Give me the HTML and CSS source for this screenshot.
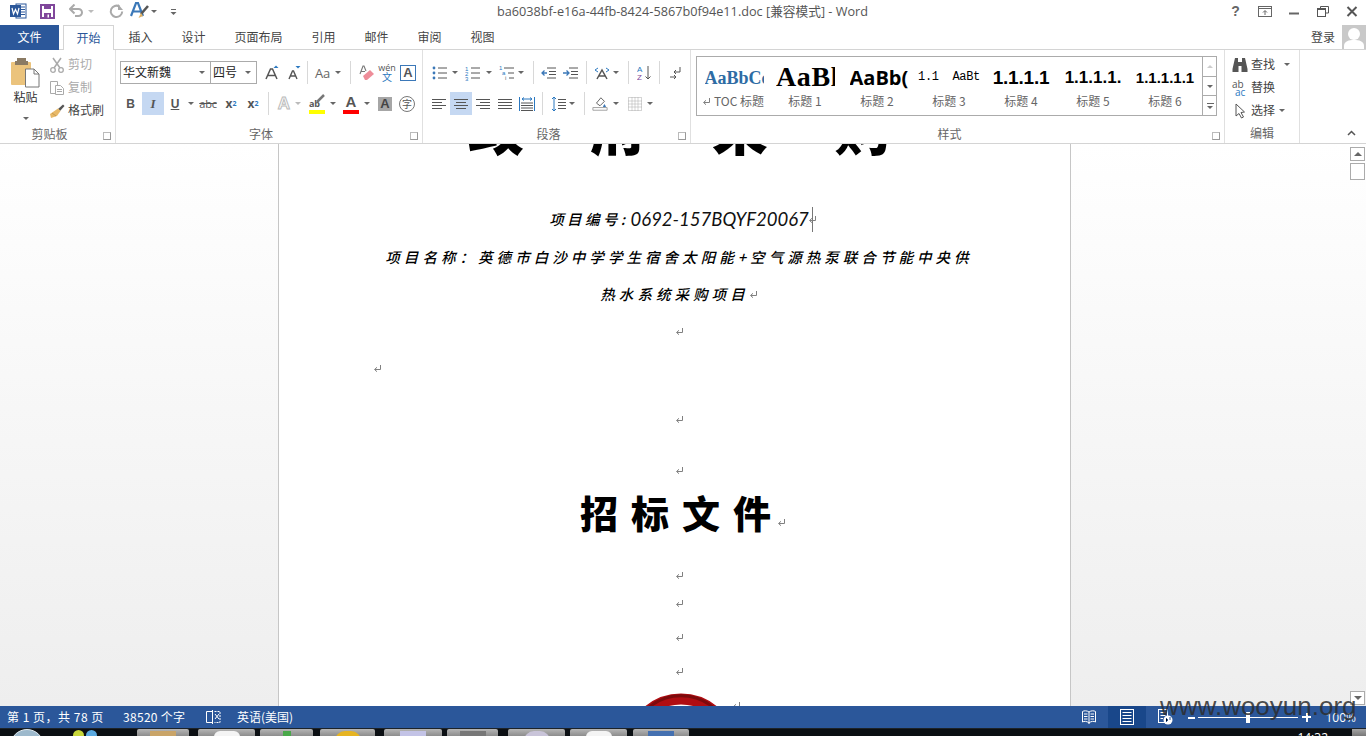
FILE: index.html
```html
<!DOCTYPE html>
<html lang="zh-CN">
<head>
<meta charset="utf-8">
<title>Word</title>
<link rel="stylesheet" href="styles.css">
</head>
<body>
<svg class="defs" xmlns="http://www.w3.org/2000/svg">
  <symbol id="pm" viewBox="0 0 9 9"><path d="M7.5 1V5.5H2M4 3.3L1.5 5.5L4 7.7" fill="none" stroke="#808080"/></symbol>
  <symbol id="lines-l" viewBox="0 0 16 16"><path d="M1 3.5H15M1 6.5H11M1 9.5H15M1 12.5H11" stroke="#555" fill="none"/></symbol>
  <symbol id="lines-c" viewBox="0 0 16 16"><path d="M1 3.5H15M3 6.5H13M1 9.5H15M3 12.5H13" stroke="#555" fill="none"/></symbol>
  <symbol id="lines-r" viewBox="0 0 16 16"><path d="M1 3.5H15M5 6.5H15M1 9.5H15M5 12.5H15" stroke="#555" fill="none"/></symbol>
  <symbol id="lines-j" viewBox="0 0 16 16"><path d="M1 3.5H15M1 6.5H15M1 9.5H15M1 12.5H15" stroke="#555" fill="none"/></symbol>
</svg>

<header class="titlebar">
  <div class="qat">
    <svg class="q-word" viewBox="0 0 17 16"><rect x="6" y="1" width="10" height="14" fill="#fff" stroke="#2b579a"/><path d="M10 4H15M10 6.500H15M10 9H15M10 11.500H15" stroke="#2b579a"/><rect x="0" y="2" width="11" height="12" fill="#2b579a"/><path d="M2 5L3.500 11L5.500 6.500L7.500 11L9 5" stroke="#fff" fill="none" stroke-width="1.200"/></svg>
    <svg class="q-save" viewBox="0 0 15 15"><path d="M1 1H14V14H1Z" fill="#fff" stroke="#80479b" stroke-width="2"/><rect x="4" y="1" width="7" height="4" fill="#80479b"/><rect x="4" y="9" width="7" height="5" fill="#80479b"/><rect x="7.500" y="10.500" width="1.500" height="3" fill="#fff"/></svg>
    <svg class="q-undo" viewBox="0 0 15 14"><path d="M1.500 5H9.500A3.500 3.500 0 0 1 9.500 12H6" fill="none" stroke="#aaa" stroke-width="2"/><path d="M5.500 0.500L1 5L5.500 9.500" fill="none" stroke="#aaa" stroke-width="2"/></svg>
    <i class="caret pale c-undo"></i>
    <svg class="q-redo" viewBox="0 0 15 15"><path d="M10.500 2.500A5.700 5.700 0 1 0 13.200 7.500" fill="none" stroke="#aaa" stroke-width="2"/><path d="M9 0V6H14Z" fill="#aaa"/></svg>
    <svg class="q-font" viewBox="0 0 19 19"><path d="M1 15L6 2H8L13 15M3.500 10.500H10.500" fill="none" stroke="#3b78b8" stroke-width="2.200"/><path d="M18 5L11 13" stroke="#555" stroke-width="2.500"/><path d="M11 12L8.500 17L13 15Z" fill="#e0b060"/></svg>
    <i class="caret c-font"></i>
    <svg class="q-more" viewBox="0 0 7 8"><path d="M1 1.500H6" stroke="#666"/><path d="M0.500 4H6.500L3.500 7Z" fill="#666"/></svg>
  </div>
  <div class="doc-title">ba6038bf-e16a-44fb-8424-5867b0f94e11.doc [兼容模式] - Word</div>
  <div class="winctl">
    <span class="wbtn help">?</span>
    <span class="wbtn"><svg viewBox="0 0 14 11" class="wicon"><rect x="0.500" y="0.500" width="13" height="10" fill="none" stroke="#666"/><path d="M0.500 2.500H13.500" stroke="#666"/><path d="M7 9V5M5 6.500L7 4.500L9 6.500" stroke="#666" fill="none"/></svg></span>
    <span class="wbtn"><svg viewBox="0 0 14 11" class="wicon"><path d="M2 7.500H12" stroke="#666" stroke-width="2"/></svg></span>
    <span class="wbtn"><svg viewBox="0 0 14 11" class="wicon"><path d="M4.500 2.500V0.500H12.500V7H10" fill="none" stroke="#555"/><rect x="1.500" y="2.500" width="8" height="8" fill="#fff" stroke="#555"/><path d="M1.500 3.500H9.500" stroke="#555"/></svg></span>
    <span class="wbtn"><svg viewBox="0 0 14 11" class="wicon"><path d="M2.500 1L11.500 10M11.500 1L2.500 10" stroke="#555" stroke-width="2"/></svg></span>
  </div>
</header>

<nav class="tabs">
  <span class="tab file">文件</span>
  <span class="tab active">开始</span>
  <span class="tab">插入</span>
  <span class="tab">设计</span>
  <span class="tab">页面布局</span>
  <span class="tab">引用</span>
  <span class="tab">邮件</span>
  <span class="tab">审阅</span>
  <span class="tab">视图</span>
  <span class="signin">登录</span>
  <svg class="avatar" viewBox="0 0 24 24"><rect width="24" height="24" fill="#c9c9c9"/><circle cx="12" cy="9" r="6" fill="#fff"/><path d="M2 24V21C2 16 7 15 12 15S22 16 22 21V24Z" fill="#fff"/></svg>
</nav>

<section class="ribbon">
  <div class="group g-clip">
    <div class="gbody clipbody">
      <div class="paste">
        <svg class="paste-ic" viewBox="0 0 29 30"><rect x="0" y="4" width="20" height="23" rx="1" fill="#ebc37c"/><rect x="6" y="0" width="9" height="4" fill="#8a7a63"/><rect x="4" y="3" width="13" height="4" fill="#8a7a63"/><path d="M14.500 11H23L28 16V29H14.500Z" fill="#fff" stroke="#777"/><path d="M23 11V16H28" fill="none" stroke="#777"/></svg>
        <span class="paste-t">粘贴</span>
        <i class="caret"></i>
      </div>
      <div class="cliprows">
        <div class="crow off"><svg class="ic" viewBox="0 0 16 16"><path d="M4 1L11 11M12 1L5 11" stroke="#aaa" stroke-width="1.500"/><circle cx="4" cy="13" r="2.300" fill="none" stroke="#aaa" stroke-width="1.300"/><circle cx="12" cy="13" r="2.300" fill="none" stroke="#aaa" stroke-width="1.300"/></svg><span>剪切</span></div>
        <div class="crow off"><svg class="ic" viewBox="0 0 16 16"><path d="M1.500 1.500H8.500V13.500H1.500Z" fill="#fff" stroke="#aaa"/><path d="M6.500 5.500H11.500L14.500 8.500V14.500H6.500Z" fill="#fff" stroke="#aaa"/><path d="M8 9.500H13M8 11.500H13" stroke="#aaa"/></svg><span>复制</span></div>
        <div class="crow"><svg class="ic" viewBox="0 0 16 16"><path d="M9 6L14 1.500L15.500 3L11 8Z" fill="#555"/><path d="M9 5.500L11.500 8L8 13L2 15L1 11Z" fill="#e8b968"/><path d="M3 10L7 13" stroke="#c69a4e"/></svg><span>格式刷</span></div>
      </div>
    </div>
    <div class="glabel"><span>剪贴板</span><i class="launch"></i></div>
  </div>

  <div class="group g-font">
    <div class="gbody rows">
      <div class="row">
        <div class="combo c-name"><span>华文新魏</span><i class="caret"></i></div>
        <div class="combo c-size"><span>四号</span><i class="caret"></i></div>
        <svg class="ic ml7" viewBox="0 0 16 16"><path d="M2 14L6.500 4H8.500L13 14M4 10.500H11" fill="none" stroke="#555" stroke-width="1.500"/><path d="M9.500 3L12 0.500L14.500 3Z" fill="#2b78c0"/></svg>
        <svg class="ic ml6" viewBox="0 0 16 16"><path d="M3 14L6.500 6H7.500L11 14M4.500 11H9.500" fill="none" stroke="#555" stroke-width="1.400"/><path d="M9.500 1L12 3.500L14.500 1Z" fill="#2b78c0"/></svg>
        <i class="vsep ml5"></i>
        <span class="aa ml7">Aa</span><i class="caret ml3"></i>
        <i class="vsep ml9"></i>
        <svg class="ic ml8" viewBox="0 0 16 16"><path d="M1 9L4 1H5L7 6M2 6.500H6" fill="none" stroke="#777" stroke-width="1.100"/><path d="M4 11L11 5L15 9L8 15H6Z" fill="#ee8d99"/></svg>
        <span class="wen ml4"><span>wén</span><b>文</b></span>
        <span class="boxa ml5">A</span>
      </div>
      <div class="row r2">
        <span class="fbtn w23 bold">B</span>
        <span class="fbtn w22 on ital">I</span>
        <span class="fbtn w22 under">U</span><i class="caret cw"></i>
        <span class="fbtn w24 abc">abc</span>
        <span class="fbtn w22 sub">x<sub>2</sub></span>
        <span class="fbtn w22 sub">x<sup>2</sup></span>
        <i class="vsep ml4"></i>
        <span class="fbtn w22 ml4 glowa">A</span><i class="caret pale"></i>
        <span class="colora ml8"><span class="hl-t">ab</span><svg class="hl-pen" viewBox="0 0 9 9"><path d="M1 8L8 1" stroke="#777" stroke-width="2.500"/></svg><i class="bar yellow"></i></span><i class="caret ml5"></i>
        <span class="colora ml7"><span class="red-a">A</span><i class="bar red"></i></span><i class="caret ml5"></i>
        <span class="graya ml8">A</span>
        <span class="zi ml7">字</span>
      </div>
    </div>
    <div class="glabel"><span>字体</span><i class="launch"></i></div>
  </div>

  <div class="group g-para">
    <div class="gbody rows">
      <div class="row">
        <svg class="ic ml9" viewBox="0 0 16 16"><circle cx="2" cy="3" r="1.400" fill="#3b78b8"/><circle cx="2" cy="8" r="1.400" fill="#3b78b8"/><circle cx="2" cy="13" r="1.400" fill="#3b78b8"/><path d="M6 3H15M6 8H15M6 13H15" stroke="#555"/></svg><i class="caret ml4"></i>
        <svg class="ic ml7" viewBox="0 0 16 16"><text x="0" y="6" class="mini">1</text><text x="0" y="11" class="mini">2</text><text x="0" y="16" class="mini">3</text><path d="M6 3H15M6 8H15M6 13H15" stroke="#555"/></svg><i class="caret ml5"></i>
        <svg class="ic ml7" viewBox="0 0 16 16"><text x="0" y="5" class="mini">1</text><text x="3" y="10" class="mini">a</text><text x="6" y="15" class="mini gray">i</text><path d="M5 3H15M9 8H15M10 13H15" stroke="#555"/></svg><i class="caret ml3"></i>
        <i class="vsep ml9"></i>
        <svg class="ic ml7" viewBox="0 0 16 16"><path d="M6 3H15M8 6.500H15M8 9.500H15M6 13H15" stroke="#555"/><path d="M6 8H1M3.500 5.500L1 8L3.500 10.500" stroke="#3b78b8" fill="none" stroke-width="1.300"/></svg>
        <svg class="ic ml6" viewBox="0 0 16 16"><path d="M6 3H15M8 6.500H15M8 9.500H15M6 13H15" stroke="#555"/><path d="M0 8H6M3.500 5.500L6 8L3.500 10.500" stroke="#3b78b8" fill="none" stroke-width="1.300"/></svg>
        <i class="vsep ml7"></i>
        <svg class="ic ml7" viewBox="0 0 16 16"><path d="M3 14L8 5L13 14M5 11H11" fill="none" stroke="#555" stroke-width="1.500"/><path d="M1 5L4 3M1 5L4 7M15 5L12 3M15 5L12 7" stroke="#2b78c0" fill="none"/></svg><i class="caret ml3"></i>
        <i class="vsep ml9"></i>
        <svg class="ic ml8" viewBox="0 0 16 16"><text x="0" y="7" class="az blue">A</text><text x="0" y="15" class="az purple">Z</text><path d="M11 1V14M8.500 11.500L11 14L13.500 11.500" stroke="#555" fill="none"/></svg>
        <i class="vsep ml6"></i>
        <svg class="ic ml8" viewBox="0 0 16 16"><path d="M12 2V7H6M8 5L6 7L8 9" fill="none" stroke="#555"/><path d="M2 12H8M6 10L8 12L6 14" fill="none" stroke="#555"/></svg>
      </div>
      <div class="row r2">
        <span class="fbtn w14 ml9"><svg class="ic"><use href="#lines-l"/></svg></span>
        <span class="fbtn w22 ml4 on"><svg class="ic"><use href="#lines-c"/></svg></span>
        <span class="fbtn w14 ml4"><svg class="ic"><use href="#lines-r"/></svg></span>
        <span class="fbtn w14 ml8"><svg class="ic"><use href="#lines-j"/></svg></span>
        <svg class="ic ml7" viewBox="0 0 16 16"><path d="M0.500 1V15M15.500 1V15" stroke="#2b78c0"/><path d="M3 3H13M5 1.500L3 3L5 4.500M11 1.500L13 3L11 4.500" stroke="#2b78c0" fill="none"/><path d="M2 7H14M2 9.500H14M2 12H14M2 14.500H14" stroke="#555"/></svg>
        <i class="vsep ml7"></i>
        <svg class="ic ml8" viewBox="0 0 16 16"><path d="M3 1V15M1 3L3 1L5 3M1 13L3 15L5 13" stroke="#2b78c0" fill="none"/><path d="M7 3.500H15M7 6.500H15M7 9.500H15M7 12.500H15" stroke="#555"/></svg><i class="caret ml2"></i>
        <i class="vsep ml9"></i>
        <svg class="ic ml7" viewBox="0 0 18 16"><path d="M5 7L10 1L14 5L9 10Z" fill="#fff" stroke="#555"/><path d="M14 8L15.500 10.500A1.500 1.500 0 0 1 12.500 10.500Z" fill="#3b78b8"/><path d="M1 12H17V15H1Z" fill="#fff" stroke="#999"/></svg><i class="caret ml5"></i>
        <svg class="ic ml8" viewBox="0 0 16 16"><path d="M1.500 1.500H14.500V14.500H1.500ZM8 1.500V14.500M1.500 8H14.500M5 1.500V14.500M11 1.500V14.500M1.500 5H14.500M1.500 11H14.500" fill="none" stroke="#aaa" stroke-dasharray="1 1"/></svg><i class="caret ml4"></i>
      </div>
    </div>
    <div class="glabel"><span>段落</span><i class="launch"></i></div>
  </div>

  <div class="group g-styles">
    <div class="gbody">
      <div class="gallery">
        <div class="style"><span class="pv p-toc">AaBbCc</span><span class="sl"><svg class="pmk"><use href="#pm"/></svg> TOC 标题</span></div>
        <div class="style"><span class="pv p-1">AaBl</span><span class="sl">标题 1</span></div>
        <div class="style"><span class="pv p-2">AaBb(</span><span class="sl">标题 2</span></div>
        <div class="style"><span class="pv p-3"><span>1.1</span><span>AaBt</span></span><span class="sl">标题 3</span></div>
        <div class="style"><span class="pv p-4">1.1.1.1</span><span class="sl">标题 4</span></div>
        <div class="style"><span class="pv p-5">1.1.1.1.</span><span class="sl">标题 5</span></div>
        <div class="style"><span class="pv p-6">1.1.1.1.1</span><span class="sl">标题 6</span></div>
        <div class="gscroll">
          <span class="gs"><i class="caret up pale"></i></span>
          <span class="gs"><i class="caret"></i></span>
          <span class="gs more"><i class="dash"></i><i class="caret"></i></span>
        </div>
      </div>
    </div>
    <div class="glabel"><span>样式</span><i class="launch"></i></div>
  </div>

  <div class="group g-edit">
    <div class="gbody cliprows editrows">
      <div class="crow"><svg class="ic" viewBox="0 0 16 16"><path d="M3 1H6V5H10V1H13L15.500 12V15H9.500V9H6.500V15H0.500V12Z" fill="#555"/></svg><span>查找</span><i class="caret c-find"></i></div>
      <div class="crow"><span class="abac"><span>ab</span><b>ac</b></span><span>替换</span></div>
      <div class="crow"><svg class="ic" viewBox="0 0 16 16"><path d="M4 1V13L7 10.500L9.500 15L11.500 14L9 9.500L12.500 9Z" fill="#fff" stroke="#555"/></svg><span>选择</span><i class="caret c-sel"></i></div>
    </div>
    <div class="glabel"><span>编辑</span></div>
  </div>

  <div class="ribbon-end"><svg class="collapse" viewBox="0 0 9 6"><path d="M1 5L4.500 1.500L8 5" fill="none" stroke="#555" stroke-width="1.500"/></svg></div>
</section>

<main class="docarea">
  <div class="gutter-l"></div>
  <article class="page">
    <div class="para top"><span class="head-top"><span class="sp66">政府采</span>购</span></div>
    <div class="para gap53 idline"><span class="cn sm">项目编号:</span> <span class="latin">0692-157BQYF20067</span><i class="cursor"></i><svg class="pmk"><use href="#pm"/></svg></div>
    <div class="para gap14"><span class="cn">项目名称：英德市白沙中学学生宿舍太阳能+空气源热泵联合节能中央供</span></div>
    <div class="para gap13"><span class="cn">热水系统采购项目</span><svg class="pmk"><use href="#pm"/></svg></div>
    <div class="para gap13"><svg class="pmk"><use href="#pm"/></svg></div>
    <div class="para gap13 left"><svg class="pmk"><use href="#pm"/></svg></div>
    <div class="para gap27"><svg class="pmk"><use href="#pm"/></svg></div>
    <div class="para gap27"><svg class="pmk"><use href="#pm"/></svg></div>
    <div class="para gap10 bigrow"><span class="big">招标文<span class="nosp">件</span></span><svg class="pmk bigmk"><use href="#pm"/></svg></div>
    <div class="para gap21"><svg class="pmk"><use href="#pm"/></svg></div>
    <div class="para gap4"><svg class="pmk"><use href="#pm"/></svg></div>
    <div class="para gap10"><svg class="pmk"><use href="#pm"/></svg></div>
    <div class="para gap10"><svg class="pmk"><use href="#pm"/></svg></div>
    <div class="para gap10 logo-row"><svg class="seal" viewBox="0 0 114 114"><circle cx="57" cy="57" r="51" fill="#fff" stroke="#b00d12" stroke-width="11"/><path d="M22 17A50 50 0 0 1 92 17" fill="none" stroke="#7c0a0c" stroke-width="3"/></svg><svg class="pmk sealmk"><use href="#pm"/></svg></div>
  </article>
  <div class="gutter-r">
    <div class="vscroll">
      <div class="vtop">
        <span class="sbtn"><i class="caret up"></i></span>
        <span class="sthumb"></span>
      </div>
      <span class="sbtn"><i class="caret"></i></span>
    </div>
  </div>
</main>

<footer class="status">
  <span class="st-a">第 1 页，共 78 页</span>
  <span class="st-b">38520 个字</span>
  <svg class="st-book" viewBox="0 0 16 16"><path d="M7.500 2.500H1.500V13.500H7.500M7.500 1V15" fill="none" stroke="#fff"/><path d="M10 5L14 10M14 5L10 10" stroke="#fff"/><path d="M9.500 2.500H15V13.500H9.500" fill="none" stroke="#fff" stroke-dasharray="2 1"/></svg>
  <span class="st-c">英语(美国)</span>
  <div class="st-right">
    <svg class="st-ic" viewBox="0 0 16 16"><path d="M8 3V15M8 3C6 1.500 3 1.500 1.500 2.500V13C3 12 6 12 8 14C10 12 13 12 14.500 13V2.500C13 1.500 10 1.500 8 3Z" fill="none" stroke="#fff"/><path d="M3 5H6.500M3 7.500H6.500M3 10H6.500M9.500 5H13M9.500 7.500H13M9.500 10H13" stroke="#fff"/></svg>
    <span class="st-view"><svg class="st-ic" viewBox="0 0 16 16"><rect x="1.500" y="0.500" width="13" height="15" fill="none" stroke="#fff"/><path d="M3.500 3.500H12.500M3.500 6.500H12.500M3.500 9.500H12.500M3.500 12.500H12.500" stroke="#fff"/></svg></span>
    <svg class="st-ic st-web" viewBox="0 0 16 16"><rect x="1.500" y="0.500" width="9" height="13" fill="none" stroke="#fff"/><path d="M3.500 3.500H8.500M3.500 6.500H8.500M3.500 9.500H6" stroke="#fff"/><circle cx="11" cy="11" r="4.500" fill="#fff"/><path d="M9 9L11 11L9 13M13 8V11" stroke="#2b579a"/></svg>
    <span class="zm minus"></span>
    <span class="slider"><i class="thumb"></i></span>
    <span class="zm plus"></span>
    <span class="pct">100%</span>
  </div>
</footer>

<div class="taskbar">
  <span class="orb"></span>
  <span class="dot d-y"></span>
  <span class="dot d-b"></span>
  <span class="tk t1"><i class="pk pk-o"></i></span>
  <span class="tk t2"><i class="pk pk-w"></i></span>
  <span class="tk t3"><i class="pk pk-g"></i></span>
  <span class="tk t4"><i class="pk pk-y"></i></span>
  <span class="tk t5"><i class="pk pk-m"></i></span>
  <span class="tk t6"><i class="pk pk-d"></i></span>
  <span class="tk t7"><i class="pk pk-l"></i></span>
  <span class="tk t8"><i class="pk pk-w"></i></span>
  <span class="tk t9"><i class="pk pk-b"></i></span>
  <span class="clock">14:32</span>
  <span class="desk"></span>
</div>

<div class="watermark">www.wooyun.org</div>
</body>
</html>
```

FILE: styles.css
```css
* { box-sizing: border-box; }
html, body { margin: 0; padding: 0; height: 736px; overflow: hidden; }
body {
  display: flex;
  flex-direction: column;
  width: 1366px;
  position: relative;
  background: #fff;
  font: 12px/1.2 "Noto Sans CJK SC", "Open Sans", sans-serif;
  color: #444;
}
i { display: block; font-style: normal; }
.defs { display: none; }

/* shared */
.caret { width: 0; height: 0; flex: none; border-style: solid; border-color: #666 transparent transparent; border-width: 3px 3px 0; }
.caret.up { border-color: transparent transparent #666; border-width: 0 3px 3px; }
.caret.pale { border-top-color: #bbb; }
.caret.up.pale { border-top-color: transparent; border-bottom-color: #ccc; }
.ic { width: 16px; height: 16px; flex: none; display: block; }
.vsep { width: 1px; height: 23px; background: #d8d8d8; flex: none; }
.ml1 { margin-left: 1px; } .ml2 { margin-left: 2px; } .ml3 { margin-left: 3px; } .ml4 { margin-left: 4px; }
.ml5 { margin-left: 5px; } .ml6 { margin-left: 6px; } .ml7 { margin-left: 7px; } .ml8 { margin-left: 8px; }
.ml9 { margin-left: 9px; }

/* title bar */
.titlebar { height: 25px; display: flex; align-items: center; flex: none; }
.qat { width: 190px; display: flex; align-items: center; padding-left: 10px; height: 25px; flex: none; }
.q-word { width: 17px; height: 16px; margin-top: -3px; }
.q-save { width: 15px; height: 15px; margin-left: 13px; margin-top: -3px; }
.q-undo { width: 15px; height: 14px; margin-left: 14px; margin-top: -3px; }
.c-undo { margin-left: 4px; margin-top: -2px; }
.q-redo { width: 15px; height: 15px; margin-left: 15px; margin-top: -3px; }
.q-font { width: 19px; height: 19px; margin-left: 6px; margin-top: -4px; }
.c-font { margin-left: 2px; margin-top: -3px; }
.q-more { width: 7px; height: 8px; margin-left: 13px; margin-top: -2px; }
.doc-title {
  flex: 1;
  text-align: center;
  padding-right: 46px;
  font: 12.7px/1.2 "Open Sans", "Noto Sans CJK SC", sans-serif;
  color: #555;
  margin-top: -1px;
  white-space: nowrap;
}
.winctl { display: flex; width: 145px; flex: none; margin-top: -3px; }
.wbtn { width: 29px; display: flex; align-items: center; justify-content: center; height: 20px; }
.help { font: bold 14px "Liberation Sans", sans-serif; color: #666; }
.wicon { width: 14px; height: 11px; }

/* tabs */
.tabs { height: 25px; display: flex; align-items: stretch; border-bottom: 1px solid #d4d4d4; flex: none; }
.tab { padding: 0 14.5px; display: flex; align-items: center; height: 25px; color: #444; font-size: 12px; }
.tab.file { width: 59px; padding: 0; justify-content: center; background: #2b579a; color: #fff; margin-right: 4px; }
.tab.active { width: 51px; padding: 0; justify-content: center; color: #2b579a; background: #fff; border: 1px solid #d4d4d4; border-bottom: 0; }
.signin { margin-left: auto; align-self: center; margin-right: 7px; color: #444; }
.avatar { width: 24px; height: 24px; display: block; }

/* ribbon */
.ribbon { height: 94px; display: flex; border-bottom: 1px solid #d4d4d4; flex: none; padding-top: 0; }
.group { display: flex; flex-direction: column; height: 93px; padding-top: 4px; position: relative; flex: none; border-right: 1px solid #e0e0e0; }
.gbody { height: 71px; flex: none; }
.glabel { height: 18px; display: flex; align-items: center; color: #666; }
.glabel span { flex: 1; text-align: center; }
.launch { width: 16px; height: 10px; flex: none; position: relative; }
.launch::after { content: ""; position: absolute; left: 4px; top: 3px; width: 6px; height: 6px; border: 1px solid #999; border-top-color: #bbb; border-left-color: #bbb; }
.g-clip { width: 116px; }
.g-font { width: 307px; }
.g-para { width: 268px; }
.g-styles { width: 534px; }
.g-edit { width: 75px; }
.ribbon-end { flex: 1; display: flex; justify-content: flex-end; align-items: flex-end; padding: 0 10px 7px 0; }
.collapse { width: 9px; height: 6px; }

.clipbody { display: flex; }
.paste { width: 48px; display: flex; flex-direction: column; align-items: center; padding-left: 3px; }
.paste-ic { width: 29px; height: 30px; margin-top: 4px; }
.paste-t { margin-top: 0; color: #333; line-height: 18px; }
.paste .caret { margin-top: 11px; }
.cliprows { display: flex; flex-direction: column; padding-left: 1px; margin-top: -1px; }
.crow { height: 23px; display: flex; align-items: center; color: #444; }
.crow > span { margin-left: 3px; }
.crow.off { color: #aaa; }
.editrows { padding-left: 7px; }
.c-find { margin-left: 9px; }
.c-sel { margin-left: 4px; }
.abac { width: 16px; font: 10px/8px "Open Sans", sans-serif; display: flex; flex-direction: column; margin-left: 0 !important; color: #555; }
.abac b { font-weight: 400; color: #2b78c0; margin-left: 3px; }

.rows { padding-top: 7px; }
.row { height: 23px; display: flex; align-items: center; }
.r2 { margin-top: 8px; }
.g-font .row { padding-left: 4px; }
.g-font .r2 { padding-left: 3px; }
.combo { height: 23px; border: 1px solid #ababab; display: flex; align-items: center; justify-content: space-between; padding: 0 5px 0 2px; background: #fff; color: #222; }
.c-name { width: 91px; }
.c-size { width: 47px; margin-left: -1px; }
.aa { font: 13px "Open Sans", sans-serif; color: #666; width: 17px; letter-spacing: -.3px; }
.wen { width: 16px; display: flex; flex-direction: column; align-items: center; font: 9px/8px "Open Sans", sans-serif; color: #555; flex: none; }
.wen b { font: 400 10px/9px "Noto Sans CJK SC", sans-serif; color: #2b78c0; }
.boxa { width: 16px; height: 16px; border: 1px solid #3b78b8; display: flex; align-items: center; justify-content: center; font: bold 13px "Liberation Sans", sans-serif; color: #555; flex: none; }
.fbtn { height: 23px; display: flex; align-items: center; justify-content: center; flex: none; color: #555; }
.fbtn.on { background: #c5d8f2; }
.w14 { width: 14px; } .w22 { width: 22px; } .w23 { width: 23px; } .w24 { width: 24px; }
.bold { font: bold 12px "Liberation Sans", sans-serif; }
.ital { font: italic 700 13px "Liberation Serif", serif; }
.under { font: bold 12px "Liberation Sans", sans-serif; text-decoration: underline; }
.abc { font: 11px "Open Sans", sans-serif; text-decoration: line-through; letter-spacing: -.2px; }
.sub { font: bold 12px "Open Sans", sans-serif; }
.sub sub, .sub sup { font-size: 7px; color: #2b78c0; }
.glowa { font: bold 17px "Liberation Sans", sans-serif; color: #fff; -webkit-text-stroke: 1px #bbb; }
.cw { margin: 0 2px; }
.colora { width: 16px; height: 21px; display: flex; flex-direction: column; align-items: center; justify-content: flex-end; position: relative; flex: none; }
.hl-t { font: bold 9px/10px "Open Sans", sans-serif; color: #555; margin-right: 5px; }
.hl-pen { width: 9px; height: 9px; position: absolute; right: 0; top: 1px; }
.bar { width: 16px; height: 4px; margin-top: 1px; }
.yellow { background: #ff0; }
.red { background: #f00; }
.red-a { font: bold 15px/14px "Liberation Sans", sans-serif; color: #555; }
.graya { width: 14px; height: 14px; background: #a6a6a6; color: #444; display: flex; align-items: center; justify-content: center; font: bold 13px "Liberation Sans", sans-serif; flex: none; }
.zi { width: 16px; height: 16px; border: 1px solid #777; border-radius: 50%; display: flex; align-items: center; justify-content: center; font-size: 10px; color: #555; flex: none; }
.mini { font: 6px "Liberation Sans", sans-serif; fill: #2b78c0; }
.mini.gray { fill: #666; }
.az { font: 8px "Liberation Sans", sans-serif; }
.blue { fill: #2b78c0; }
.purple { fill: #80479b; }

/* style gallery */
.gallery { margin: 2px 0 0 5px; width: 521px; height: 60px; border: 1px solid #ababab; display: flex; background: #fff; }
.style { width: 72px; flex: none; display: flex; flex-direction: column; align-items: center; overflow: hidden; }
.pv { height: 33px; white-space: nowrap; width: 62px; overflow: hidden; display: block; color: #000; margin-top: 3px; text-align: center; }
.sl { color: #666; line-height: 16px; white-space: nowrap; display: flex; align-items: center; gap: 3px; }
.p-toc { font: bold 18px/36px "Liberation Serif", serif; color: #2e6ca4; text-align: left; width: 59px; margin-left: 2px; }
.p-1 { font: bold 28px/33px "Liberation Serif", serif; width: 59px; text-align: left; letter-spacing: .6px; margin-left: 1px; }
.p-2 { font: bold 20px/35px "Open Sans", "Liberation Sans", sans-serif; text-align: left; width: 58px; margin-left: 3px; }
.p-3 { font: 12px/35px "Liberation Mono", monospace; display: flex; justify-content: space-between; width: 62px; letter-spacing: -.3px; }
.p-4 { font: bold 19px/35px "Liberation Sans", sans-serif; letter-spacing: -.2px; }
.p-5 { font: bold 17px/35px "Liberation Sans", sans-serif; }
.p-6 { font: bold 15px/35px "Liberation Sans", sans-serif; }
.gscroll { width: 15px; margin-left: 1px; border-left: 1px solid #ababab; display: flex; flex-direction: column; flex: none; }
.gs { height: 19px; border-bottom: 1px solid #ababab; display: flex; flex-direction: column; align-items: center; justify-content: center; gap: 2px; flex: 1; }
.gs.more { border-bottom: 0; }
.dash { width: 7px; height: 1px; background: #666; }

/* document */
.docarea { height: 562px; display: flex; flex: none; background: linear-gradient(#fff, #eee); overflow: hidden; }
.gutter-l { width: 278px; flex: none; }
.page { width: 793px; flex: none; background: #fff; border-left: 1px solid #c6c6c6; border-right: 1px solid #c6c6c6; padding: 0 85px 0 94px; overflow: hidden; height: 562px; }
.gutter-r { flex: 1; display: flex; justify-content: flex-end; }
.vscroll { width: 17px; display: flex; flex-direction: column; justify-content: space-between; padding: 3px 1px 1px 1px; }
.vtop { display: flex; flex-direction: column; gap: 2px; }
.sbtn { height: 14px; width: 15px; border: 1px solid #ababab; background: #fff; display: flex; align-items: center; justify-content: center; }
.sbtn .caret { border-width: 4px 4px 0; }
.sbtn .caret.up { border-width: 0 4px 4px; }
.sthumb { height: 17px; width: 15px; border: 1px solid #ababab; background: #fff; }

.para { height: 24px; display: flex; align-items: center; justify-content: center; white-space: nowrap; color: #000; }
.para.left { justify-content: flex-start; }
.top { height: 56px; margin-top: -46px; }
.gap53 { margin-top: 53px; } .gap14 { margin-top: 14px; } .gap13 { margin-top: 13px; } .gap27 { margin-top: 27px; }
.gap10 { margin-top: 10px; } .gap21 { margin-top: 21px; } .gap4 { margin-top: 4px; }
.head-top { font: 900 56px/56px "Noto Sans CJK SC", sans-serif; color: #000; }
.sp66 { letter-spacing: 66px; }
.idline { padding-left: 8px; }
.cn { font: italic 500 14.5px/24px "Noto Sans CJK SC", sans-serif; letter-spacing: 4.05px; color: #000; }
.cn.sm { letter-spacing: 3.4px; }
.latin { font: italic 18.5px/24px "Lato", "Open Sans", sans-serif; color: #111; margin-left: 2px; }
.pmk { width: 9px; height: 9px; flex: none; display: block; }
.cursor { width: 1px; height: 25px; background: #777; margin: 0 -5px 0 3px; }
.bigrow { height: 50px; padding: 0 0 10px 8px; }
.big { font: 900 38px/40px "Noto Sans CJK SC", sans-serif; letter-spacing: 13px; color: #000; }
.nosp { letter-spacing: 0; }
.bigmk { margin: 20px 0 0 6px; }
.logo-row { height: 114px; align-items: flex-start; padding-left: 6px; }
.seal { width: 114px; height: 114px; display: block; }
.sealmk { margin: 8px 0 0 -6px; }

/* status bar */
.status { height: 22px; background: #2b579a; color: #fff; display: flex; align-items: center; padding-left: 7px; flex: none; }
.st-a { width: 116px; letter-spacing: .5px; }
.st-b { width: 82px; letter-spacing: .3px; }
.st-book { width: 16px; height: 16px; }
.st-c { margin-left: 16px; }
.st-right { margin-left: auto; display: flex; align-items: center; height: 22px; padding-right: 10px; }
.st-ic { width: 16px; height: 16px; display: block; flex: none; }
.st-view { width: 38px; height: 22px; background: #19478a; display: flex; align-items: center; justify-content: center; margin-left: 11px; }
.st-web { margin-left: 11px; }
.zm { width: 9px; height: 9px; margin-left: 14px; position: relative; flex: none; }
.minus::after, .plus::after, .plus::before { content: ""; position: absolute; background: #fff; }
.minus::after { left: 1px; right: 1px; top: 4px; height: 2px; }
.plus::after { left: 0; right: 0; top: 3.5px; height: 2px; }
.plus::before { top: 0; bottom: 0; left: 3.5px; width: 2px; }
.slider { width: 100px; height: 1px; background: #fff; margin-left: 2px; position: relative; flex: none; }
.thumb { position: absolute; left: 48px; top: -5px; width: 4px; height: 11px; background: #fff; }
.plus { margin-left: 4px; }
.pct { margin-left: 14px; font: 12px "Open Sans", sans-serif; }

/* taskbar */
.taskbar { height: 8px; background: #0b0f13; border-top: 1px solid #1d2328; display: flex; flex: none; overflow: hidden; position: relative; }
.orb { width: 34px; height: 34px; border-radius: 50%; background: #9db9cc; margin-left: 10px; flex: none; border: 1px solid #dfe8ee; }
.dot { width: 11px; height: 11px; border-radius: 50%; flex: none; margin-top: 1px; }
.d-y { background: #c7d63a; margin-left: 29px; }
.d-b { background: #5aa9e0; margin-left: 2px; }
.tk { height: 12px; background: linear-gradient(#b5b5b5, #707070); border-radius: 2px 2px 0 0; flex: none; display: flex; justify-content: center; }
.pk { width: 26px; height: 12px; margin-top: 2px; }
.t1 { width: 52px; margin-left: 40px; }
.t2 { width: 57px; margin-left: 9px; }
.t3 { width: 53px; margin-left: 5px; }
.t4 { width: 55px; margin-left: 7px; }
.t5 { width: 58px; margin-left: 9px; }
.t6 { width: 51px; margin-left: 5px; }
.t7 { width: 57px; margin-left: 10px; }
.t8 { width: 57px; margin-left: 5px; }
.t9 { width: 56px; margin-left: 6px; }
.pk-o { background: #c9a468; }
.pk-w { background: #f4f4f4; border-radius: 6px 6px 0 0; }
.pk-g { background: #4aa84a; width: 8px; }
.pk-y { background: #e6b422; border-radius: 10px 10px 0 0; }
.pk-m { background: #c3c3e6; }
.pk-d { background: #777; }
.pk-l { background: #c9c4d9; border-radius: 10px 10px 0 0; }
.pk-b { background: #4470b0; }
.clock { margin-left: auto; font: 12px/12px "Open Sans", sans-serif; color: #fff; margin-top: 3px; margin-right: 24px; }
.desk { width: 14px; height: 12px; background: linear-gradient(#a5a5a5, #555); flex: none; }

.watermark {
  position: absolute;
  left: 1160px;
  top: 691px;
  font: 26px/30px "Liberation Sans", sans-serif;
  color: rgba(45, 45, 45, .85);
  white-space: nowrap;
}
```
